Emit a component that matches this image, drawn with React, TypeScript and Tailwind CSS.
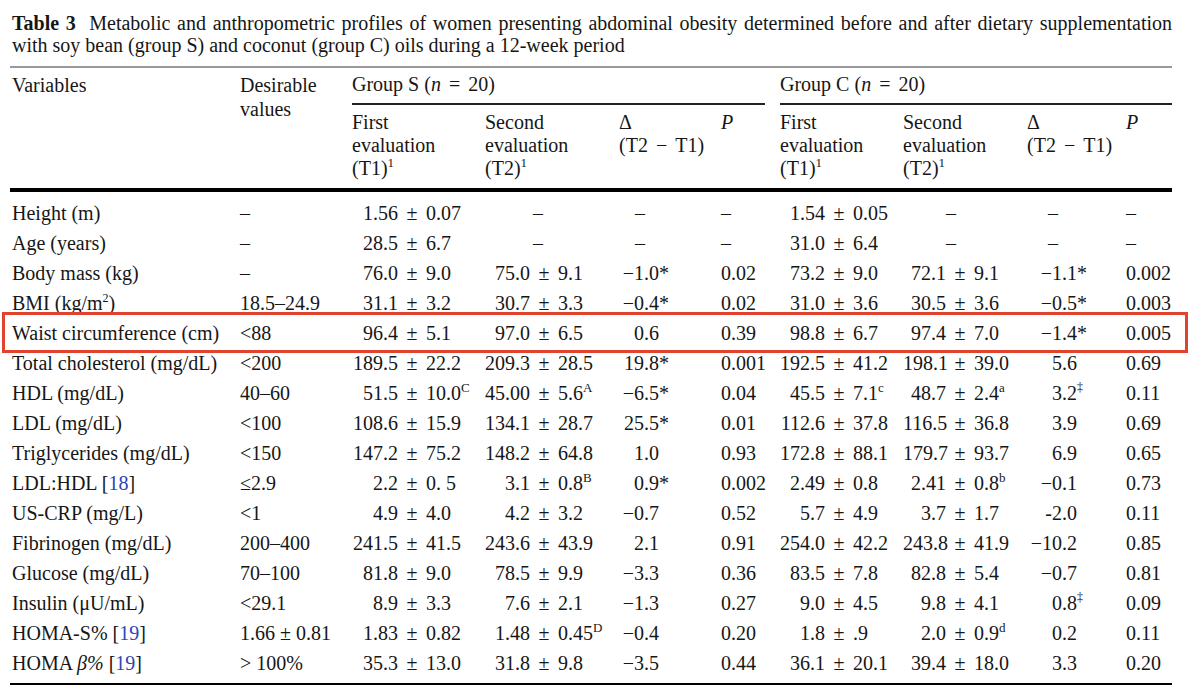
import type { ReactNode } from 'react'

const grid =
  'grid grid-cols-[230px_112px_133px_134px_102px_59px_123px_124px_99px_46px]'

const Ref = ({ n }: { n: string }) => (
  <>
    [<span className="text-[#2b44b8]">{n}</span>]
  </>
)

type Row = { label: ReactNode; v: string[] }

const rows: Row[] = [
  { label: 'Height (m)', v: ['–', '1.56 ± 0.07', '–', '–', '–', '1.54 ± 0.05', '–', '–', '–'] },
  { label: 'Age (years)', v: ['–', '28.5 ± 6.7', '–', '–', '–', '31.0 ± 6.4', '–', '–', '–'] },
  { label: 'Body mass (kg)', v: ['–', '76.0 ± 9.0', '75.0 ± 9.1', '−1.0*', '0.02', '73.2 ± 9.0', '72.1 ± 9.1', '−1.1*', '0.002'] },
  {
    label: (
      <>
        BMI (kg/m<sup className="text-[12px] top-[-8px]">2</sup>)
      </>
    ),
    v: ['18.5–24.9', '31.1 ± 3.2', '30.7 ± 3.3', '−0.4*', '0.02', '31.0 ± 3.6', '30.5 ± 3.6', '−0.5*', '0.003'],
  },
  { label: 'Waist circumference (cm)', v: ['<88', '96.4 ± 5.1', '97.0 ± 6.5', '0.6', '0.39', '98.8 ± 6.7', '97.4 ± 7.0', '−1.4*', '0.005'] },
  { label: 'Total cholesterol (mg/dL)', v: ['<200', '189.5 ± 22.2', '209.3 ± 28.5', '19.8*', '0.001', '192.5 ± 41.2', '198.1 ± 39.0', '5.6', '0.69'] },
  { label: 'HDL (mg/dL)', v: ['40–60', '51.5 ± 10.0^C', '45.00 ± 5.6^A', '−6.5*', '0.04', '45.5 ± 7.1^c', '48.7 ± 2.4^a', '3.2^‡', '0.11'] },
  { label: 'LDL (mg/dL)', v: ['<100', '108.6 ± 15.9', '134.1 ± 28.7', '25.5*', '0.01', '112.6 ± 37.8', '116.5 ± 36.8', '3.9', '0.69'] },
  { label: 'Triglycerides (mg/dL)', v: ['<150', '147.2 ± 75.2', '148.2 ± 64.8', '1.0', '0.93', '172.8 ± 88.1', '179.7 ± 93.7', '6.9', '0.65'] },
  {
    label: (
      <>
        LDL:HDL <Ref n="18" />
      </>
    ),
    v: ['≤2.9', '2.2 ± 0. 5', '3.1 ± 0.8^B', '0.9*', '0.002', '2.49 ± 0.8', '2.41 ± 0.8^b', '−0.1', '0.73'],
  },
  { label: 'US-CRP (mg/L)', v: ['<1', '4.9 ± 4.0', '4.2 ± 3.2', '−0.7', '0.52', '5.7 ± 4.9', '3.7 ± 1.7', '-2.0', '0.11'] },
  { label: 'Fibrinogen (mg/dL)', v: ['200–400', '241.5 ± 41.5', '243.6 ± 43.9', '2.1', '0.91', '254.0 ± 42.2', '243.8 ± 41.9', '−10.2', '0.85'] },
  { label: 'Glucose (mg/dL)', v: ['70–100', '81.8 ± 9.0', '78.5 ± 9.9', '−3.3', '0.36', '83.5 ± 7.8', '82.8 ± 5.4', '−0.7', '0.81'] },
  { label: 'Insulin (μU/mL)', v: ['<29.1', '8.9 ± 3.3', '7.6 ± 2.1', '−1.3', '0.27', '9.0 ± 4.5', '9.8 ± 4.1', '0.8^‡', '0.09'] },
  {
    label: (
      <>
        HOMA-S% <Ref n="19" />
      </>
    ),
    v: ['1.66 ± 0.81', '1.83 ± 0.82', '1.48 ± 0.45^D', '−0.4', '0.20', '1.8 ± .9', '2.0 ± 0.9^d', '0.2', '0.11'],
  },
  {
    label: (
      <>
        HOMA <i>β%</i> <Ref n="19" />
      </>
    ),
    v: ['> 100%', '35.3 ± 13.0', '31.8 ± 9.8', '−3.5', '0.44', '36.1 ± 20.1', '39.4 ± 18.0', '3.3', '0.20'],
  },
]

// value ± sd, aligned on the ± sign
function Pm({ v, lw, dash }: { v: string; lw: string; dash: string }) {
  if (v === '–') return <div className={dash}>–</div>
  const [main, sup] = v.split('^')
  const [a, b] = main.split(' ± ')
  return (
    <div className="flex whitespace-nowrap">
      <span className={`${lw} shrink-0 text-right`}>{a}</span>
      <span className="w-[28px] shrink-0 text-center">±</span>
      <span>
        {b}
        {sup && <sup className="text-[13px] top-[-8px]">{sup}</sup>}
      </span>
    </div>
  )
}

// differences, right aligned on the number, marks hang after it
function Delta({ v, pr, dash }: { v: string; pr: string; dash: string }) {
  if (v === '–') return <div className={dash}>–</div>
  let num = v
  let mark = ''
  let dagger = false
  if (v.endsWith('*')) {
    num = v.slice(0, -1)
    mark = '*'
  } else if (v.includes('^')) {
    ;[num, mark] = v.split('^')
    dagger = true
  }
  return (
    <div className={`text-right ${pr}`}>
      <span className="relative">
        {num}
        {mark && (
          <span
            className={
              dagger
                ? 'absolute left-full top-[-1px] text-[12px] leading-none'
                : 'absolute left-full top-[-4px]'
            }
          >
            {mark}
          </span>
        )}
      </span>
    </div>
  )
}

function DataRow({ row }: { row: Row }) {
  const v = row.v
  return (
    <div className={`${grid} h-[30px] items-center whitespace-nowrap leading-[30px]`}>
      <div className="pl-[2px]">{row.label}</div>
      <div>{v[0]}</div>
      <Pm v={v[1]} lw="w-[46px]" dash="pl-[48px]" />
      <Pm v={v[2]} lw="w-[45px]" dash="pl-[48px]" />
      <Delta v={v[3]} pr="pr-[62px]" dash="pl-[16px]" />
      <div>{v[4]}</div>
      <Pm v={v[5]} lw="w-[45px]" dash="pl-[43px]" />
      <Pm v={v[6]} lw="w-[43px]" dash="pl-[43px]" />
      <Delta v={v[7]} pr="pr-[49px]" dash="pl-[21px]" />
      <div>{v[8]}</div>
    </div>
  )
}

function Group({ name, widths, ruleGap }: { name: string; widths: string; ruleGap: string }) {
  return (
    <div className="flex flex-col">
      <div className="leading-[22px]">
        Group {name} (<i>n</i>
        <span className="mx-[8px]">=</span>20)
      </div>
      <div className={`mt-[8px] h-[2px] bg-[#222] ${ruleGap}`} />
      <div className={`grid ${widths} mt-[6px] leading-[23px]`}>
        <div>
          <div>First</div>
          <div>evaluation</div>
          <div>
            (T1)<sup className="text-[13px] top-[-8px]">1</sup>
          </div>
        </div>
        <div>
          <div>Second</div>
          <div>evaluation</div>
          <div>
            (T2)<sup className="text-[13px] top-[-8px]">1</sup>
          </div>
        </div>
        <div className="whitespace-nowrap">
          <div>Δ</div>
          <div>
            (T2<span className="mx-[8px]">−</span>T1)
          </div>
        </div>
        <div>
          <i>P</i>
        </div>
      </div>
    </div>
  )
}

export default function App() {
  return (
    <div className="h-[696px] w-[1200px] overflow-hidden bg-white text-[20px] text-[#161616] [font-family:'Liberation_Serif','Times_New_Roman',serif]">
      <div className="ml-[12px] w-[1160px] pt-[12px] leading-[22px]">
        <div className="text-justify [text-align-last:justify]">
          <b>Table 3</b>&nbsp; Metabolic and anthropometric profiles of women presenting abdominal
          obesity determined before and after dietary supplementation
        </div>
        <div>with soy bean (group S) and coconut (group C) oils during a 12-week period</div>
      </div>

      <div className="ml-[10px] w-[1162px]">
        <div className="mt-[10px] h-[2px] bg-[#999]" />

        {/* header */}
        <div className="mt-[5px] flex">
          <div className="w-[230px] pl-[2px] leading-[24px]">Variables</div>
          <div className="w-[112px] leading-[24px]">
            <div>Desirable</div>
            <div>values</div>
          </div>
          <div className="w-[428px]">
            <Group name="S" widths="grid-cols-[133px_134px_102px_59px]" ruleGap="mr-[15px]" />
          </div>
          <div className="w-[392px]">
            <Group name="C" widths="grid-cols-[123px_124px_99px_46px]" ruleGap="" />
          </div>
        </div>

        <div className="mt-[8px] h-[4px] bg-black" />

        {/* body */}
        <div className="mt-[6px]">
          {rows.map((r, i) =>
            i === 4 ? (
              <div key={i} className="relative">
                <DataRow row={r} />
                <div className="pointer-events-none absolute -bottom-[5px] -left-[8px] -right-[16px] -top-[6px] border-[3px] border-[#e2432f]" />
              </div>
            ) : (
              <DataRow key={i} row={r} />
            ),
          )}
        </div>

        <div className="mt-[5px] h-[2px] bg-black" />
      </div>
    </div>
  )
}
